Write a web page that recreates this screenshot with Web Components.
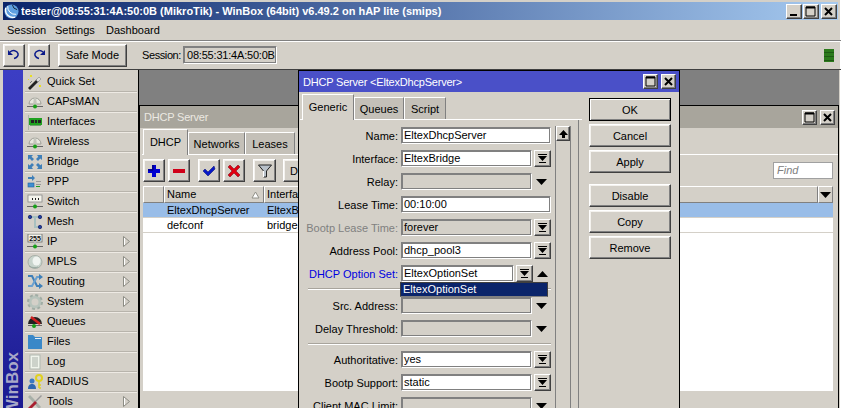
<!DOCTYPE html>
<html>
<head>
<meta charset="utf-8">
<title>WinBox</title>
<style>
  html, body { margin: 0; padding: 0; height: 100%; overflow: hidden; background: #d4d0c8; }
  body { font: 11px "Liberation Sans", Arial, sans-serif; color: #000; }
</style>
</head>
<body>
<wb-app></wb-app>

<script>
// shared 3d edge, pasted into each shadow style
const RAISED = 'background:#d4d0c8;border:1px solid;border-color:#fff #404040 #404040 #fff;box-shadow:inset -1px -1px 0 #808080;box-sizing:border-box;';

const ICONS = {
  quickset: `<path d="M1 14l9-9 2 2-9 9z" fill="#222"/><path d="M9 6l3-3 2 2-3 3z" fill="#ddd" stroke="#777" stroke-width=".5"/><path d="M3 9l2-2" stroke="#777"/><rect x="3" y="1" width="2" height="2" fill="#e8e020"/><rect x="12" y="11" width="2" height="2" fill="#e8e020"/><rect x="1" y="5" width="1" height="1" fill="#e8e020"/>`,
  caps: `<path d="M2 10a6 6 0 0 1 12 0z" fill="#e8e8e0" stroke="#a0a098"/><path d="M7 3h2l1 8H6z" fill="#c4c4bc"/><rect x="0" y="12" width="16" height="1" fill="#666"/><circle cx="8" cy="12.5" r="2" fill="#18a018"/>`,
  iface: `<rect x="1" y="1" width="1" height="15" fill="#a8b8a8"/><rect x="2" y="4" width="13" height="7" fill="#20a020"/><rect x="4" y="6" width="3" height="3" fill="#222"/><rect x="8" y="6" width="2" height="3" fill="#222"/><rect x="11" y="6" width="3" height="3" fill="#222"/><rect x="3" y="11" width="11" height="1" fill="#70a070"/>`,
  bridge: `<g fill="#3f7fb8"><path d="M1 1h5L4.500 2.700 7 5 5 7 2.700 4.500 1 6z"/><path d="M15 1v5l-1.700-1.500L11 7 9 5l2.300-2.300L10 1z"/><path d="M1 15v-5l1.700 1.500L5 9l2 2-2.300 2.300L6 15z"/><path d="M15 15h-5l1.300-1.700L9 11l2-2 2.300 2.300L15 10z"/></g>`,
  ppp: `<path d="M1 3h4V1l3 3-3 3V5H1z" fill="#3f7fb8"/><rect x="1" y="9" width="6" height="4" fill="#3f8fd0" stroke="#2060a0" stroke-width=".6"/><rect x="9" y="7" width="5" height="1" fill="#999"/><rect x="9" y="10" width="5" height="1" fill="#999"/><rect x="9" y="12" width="4" height="1" fill="#20a020"/>`,
  sw: `<rect x="1" y="1" width="14" height="7" fill="#f4f4ec" stroke="#888" stroke-width=".8"/><rect x="5" y="4" width="1" height="2" fill="#222"/><rect x="8" y="4" width="1" height="2" fill="#222"/><rect x="11" y="4" width="1" height="2" fill="#222"/><rect x="7" y="8" width="2" height="4" fill="#bbb"/><rect x="0" y="12" width="16" height="1" fill="#666"/><circle cx="8" cy="12.500" r="2" fill="#18a018"/>`,
  mesh: `<path d="M3 3h10M8 3v10h5" stroke="#a8c0c0" stroke-width="2" fill="none"/><g fill="#2040a0" stroke="#101860" stroke-width=".7"><circle cx="3" cy="3" r="1.700"/><circle cx="13" cy="3" r="1.700"/><circle cx="13" cy="13" r="1.700"/></g>`,
  ip: `<rect x="1" y="0" width="14" height="8" fill="#f4f4ec" stroke="#666" stroke-width=".8"/><text x="8" y="7" font-size="7" font-weight="700" text-anchor="middle" font-family="Liberation Sans" fill="#111">255</text><rect x="7" y="8" width="2" height="4" fill="#bbb"/><rect x="0" y="12" width="16" height="1" fill="#666"/><circle cx="8" cy="12.500" r="2" fill="#18a018"/>`,
  mpls: `<ellipse cx="8" cy="8" rx="7" ry="6.500" fill="#c8d4cc" stroke="#a8b0a8"/><ellipse cx="9.500" cy="7" rx="4" ry="4.500" fill="#f0f4f0"/><path d="M2 12c3 2 7 2 9 1" stroke="#98a8a0" fill="none"/>`,
  routing: `<path d="M1 2h4l5 10h2" stroke="#3f7fb8" stroke-width="2" fill="none"/><path d="M1 12h4l5-9h2" stroke="#6aa0d0" stroke-width="2" fill="none"/><path d="M12 0l4 3-4 3zM12 9l4 3-4 3z" fill="#3f7fb8"/>`,
  system: `<circle cx="8" cy="8" r="5" fill="none" stroke="#b8c4bc" stroke-width="3"/><circle cx="8" cy="8" r="7" fill="none" stroke="#a0aca4" stroke-width="2" stroke-dasharray="3 2.500"/>`,
  queues: `<path d="M1 10a7 7 0 0 1 14 0z" fill="#222"/><path d="M4 3l9 7" stroke="#d02020" stroke-width="2.500"/><rect x="1" y="11" width="14" height="1" fill="#666"/><circle cx="7" cy="12" r="2" fill="#18a018"/>`,
  files: `<path d="M1 1h5l2 2h7v12H1z" fill="#3a88c8"/><rect x="8" y="4" width="6" height="1" fill="#e8f0f8"/>`,
  log: `<rect x="3" y="1" width="10" height="14" fill="#f0f4ec" stroke="#b0b8b0"/><path d="M5 4h6M5 6h6M5 8h6M5 10h6M5 12h6" stroke="#a8b0a8"/>`,
  radius: `<circle cx="5" cy="7" r="2.500" fill="#3a78c0"/><path d="M1 15c0-4 2-5 4-5s4 1 4 5z" fill="#2f68b0"/><circle cx="12" cy="4" r="3" fill="none" stroke="#e0d020" stroke-width="2"/><path d="M12 7v7M12 11h2M12 14h2" stroke="#e0d020" stroke-width="1.600"/>`,
  tools: `<path d="M3 1l3 3 8 9-2 2-8-9-3-3z" fill="#a8b0a8"/><path d="M14 1l1 1-6 6-1-1z" fill="#999"/><path d="M1 14l7-7 2 2-7 7z" fill="#a82030"/>`,
  undo: `<path d="M4 5c3-2.500 7-1.500 8 1.500.6 2-1 4.500-4 5" stroke="#0a1a8a" stroke-width="1.500" fill="none"/><path d="M2 3v5h5z" fill="#0a1a8a"/>`,
  redo: `<path d="M12 5C9 2.500 5 3.500 4 6.500c-.6 2 1 4.500 4 5" stroke="#0a1a8a" stroke-width="1.500" fill="none"/><path d="M14 3v5H9z" fill="#0a1a8a"/>`,
  plus: `<path d="M6 2h4v4h4v4h-4v4H6v-4H2V6h4z" fill="#0000d0"/><path d="M7 2v5H2" stroke="#000060" fill="none"/>`,
  minus: `<rect x="2" y="6" width="12" height="4" fill="#d00018"/>`,
  check: `<path d="M2 8l2-2 3 3 6-6 1 3-7 7z" fill="#0818c8" stroke="#000868" stroke-width=".5"/>`,
  cross: `<path d="M2 4l2-2 4 4 4-4 2 2-4 4 4 4-2 2-4-4-4 4-2-2 4-4z" fill="#e00010" stroke="#700010" stroke-width=".5"/>`,
  filter: `<path d="M1.500 2h13L9.500 8v6h-3V8z" fill="#b8c0c8" stroke="#222"/><path d="M6.500 8v6" stroke="#fff"/>`
};
function icon(name, size) {
  return `<svg xmlns="http://www.w3.org/2000/svg" width="${size}" height="${size}" viewBox="0 0 16 16" style="display:block">${ICONS[name]}</svg>`;
}

class Base extends HTMLElement {
  constructor() {
    super();
    this.attachShadow({ mode: 'open' });
  }
  render(css, html) {
    this.shadowRoot.innerHTML = `<style>${css}</style>${html}`;
  }
  connectedCallback() {
    if (!this.done) { this.done = true; this.draw(); }
  }
}

// little caption glyph button: min, max, close
class WbCap extends Base {
  draw() {
    const big = this.hasAttribute('big');
    const k = this.getAttribute('kind');
    const g = {
      min: '<rect x="3" y="9" width="7" height="2" fill="#000"/>',
      max: '<path d="M2 2h9v9H2z" fill="none" stroke="#000"/><path d="M2 2.500h9" stroke="#000" stroke-width="2"/>',
      close: '<path d="M3 3l7 7M10 3l-7 7" stroke="#000" stroke-width="2"/>'
    }[k];
    this.render(`
      :host { display:block; width:${big ? 16 : 15}px; height:15px; ${RAISED} }
      svg { display:block; margin:0; }
    `, `<svg width="13" height="13" viewBox="0 0 13 13">${g}</svg>`);
  }
}
customElements.define('wb-cap', WbCap);

class WbTitlebar extends Base {
  draw() {
    this.render(`
      :host { display:flex; align-items:center; height:18px; margin:2px 3px 0; padding-left:1px;
        background:linear-gradient(90deg,#0a246a,#a6caf0); color:#fff; font:700 11px "Liberation Sans",sans-serif; }
      .t { flex:1; margin-left:2px; white-space:nowrap; overflow:hidden; }
      .b { display:flex; gap:1px; margin-right:1px; }
      .b wb-cap:last-child { margin-left:1px; }
    `, `
      <svg width="15" height="15" viewBox="0 0 16 16"><circle cx="8" cy="8" r="7.500" fill="#5f9fe0"/><path d="M2 4a8 8 0 0 0 10 10" stroke="#fff" stroke-width="1.500" fill="none"/><path d="M4 2a8 8 0 0 0 9 9" stroke="#fff" fill="none"/><path d="M9 1a6 6 0 0 0 5 5" stroke="#123" fill="none"/></svg>
      <span class="t">tester@08:55:31:4A:50:0B (MikroTik) - WinBox (64bit) v6.49.2 on hAP lite (smips)</span>
      <div class="b"><wb-cap big kind="min"></wb-cap><wb-cap big kind="max"></wb-cap><wb-cap big kind="close"></wb-cap></div>
    `);
  }
}
customElements.define('wb-titlebar', WbTitlebar);

class WbMenubar extends Base {
  draw() {
    this.render(`
      :host { display:grid; grid-template-columns:48px 51px auto; height:20px; align-items:center; padding-left:7px;
        border-bottom:1px solid #808080; box-shadow:0 1px 0 #fff; }
      span { white-space:nowrap; }
      span:first-child { letter-spacing:-.6px; }
    `, `<span>Session</span><span>Settings</span><span>Dashboard</span>`);
  }
}
customElements.define('wb-menubar', WbMenubar);

class WbBtn extends Base {
  draw() {
    const w = this.getAttribute('w');
    const h = this.getAttribute('h') || 23;
    const def = this.hasAttribute('default');
    this.render(`
      :host { display:flex; align-items:center; justify-content:center; flex:none; white-space:nowrap;
        ${w ? `width:${w}px;` : ''} height:${h}px; ${RAISED}
        ${def ? 'border-color:#000;box-shadow:inset 1px 1px 0 #fff,inset -1px -1px 0 #808080;' : 'box-shadow:inset -1px -1px 0 #808080,inset 1px 1px 0 #f4f2ee;'} }
    `, `<slot></slot>`);
  }
}
customElements.define('wb-btn', WbBtn);

class WbIconBtn extends Base {
  draw() {
    this.render(`
      :host { display:flex; align-items:center; justify-content:center; flex:none;
        width:${this.getAttribute('w') || 22}px; height:23px; margin-right:${this.getAttribute('mr') || 0}px; ${RAISED}
        box-shadow:inset -1px -1px 0 #808080,inset 1px 1px 0 #f4f2ee; }
    `, icon(this.getAttribute('icon'), 16));
  }
}
customElements.define('wb-iconbtn', WbIconBtn);

class WbToolbar extends Base {
  draw() {
    this.render(`
      :host { display:flex; align-items:center; height:28px; padding:0 7px 0 3px; border-bottom:1px solid #404040; }
      .sess { margin-left:15px; width:41px; flex:none; letter-spacing:-.4px; }
      .field { width:94px; height:18px; line-height:16px; padding-left:3px; box-sizing:border-box;
        border:1px solid; border-color:#808080 #fff #fff #808080; box-shadow:inset 1px 1px 0 #808080, inset -1px -1px 0 #808080; white-space:nowrap; letter-spacing:-.2px; }
      .led { margin-left:auto; width:10px; height:13px; background:repeating-linear-gradient(180deg,#2c7a1c 0 3px,#1e5a14 3px 4px); }
    `, `
      <wb-iconbtn icon="undo" mr="3"></wb-iconbtn><wb-iconbtn icon="redo" mr="8"></wb-iconbtn>
      <wb-btn w="69">Safe Mode</wb-btn>
      <span class="sess">Session:</span><div class="field">08:55:31:4A:50:0B</div>
      <div class="led"></div>
    `);
  }
}
customElements.define('wb-toolbar', WbToolbar);

class WbSideItem extends Base {
  draw() {
    const sub = this.hasAttribute('sub');
    this.render(`
      :host { display:flex; align-items:center; height:20px; box-sizing:border-box;
        border-bottom:1px solid #b8b4ac; box-shadow:0 1px 0 #eeeae4; }
      .i { width:16px; height:16px; margin:0 4px 0 2px; flex:none; }
      .a { margin-left:auto; margin-right:7px; }
      span { white-space:nowrap; padding-bottom:2px; }
    `, `<div class="i">${icon(this.getAttribute('icon'), 16)}</div><span><slot></slot></span>
      ${sub ? `<svg class="a" width="7" height="11" viewBox="0 0 7 11"><path d="M.5.500l6 5-6 5z" fill="#d4d0c8" stroke="#8c8c84"/><path d="M1.500 2v7" stroke="#fff"/></svg>` : ''}`);
  }
}
customElements.define('wb-sideitem', WbSideItem);

class WbSidebar extends Base {
  draw() {
    const items = [
      ['quickset', 'Quick Set'], ['caps', 'CAPsMAN'], ['iface', 'Interfaces'], ['caps', 'Wireless'],
      ['bridge', 'Bridge'], ['ppp', 'PPP'], ['sw', 'Switch'], ['mesh', 'Mesh'], ['ip', 'IP', 1],
      ['mpls', 'MPLS', 1], ['routing', 'Routing', 1], ['system', 'System', 1], ['queues', 'Queues'],
      ['files', 'Files'], ['log', 'Log'], ['radius', 'RADIUS'], ['tools', 'Tools', 1]
    ];
    this.render(`
      :host { display:flex; flex:none; width:135px; margin-left:3px; overflow:hidden; border-right:1px solid #000; }
      .strip { width:20px; flex:none; position:relative; overflow:hidden;
        background:linear-gradient(180deg,#3c3ec4,#3434b4 45%,#1a1a90); }
      .word { position:absolute; left:0; top:282px; writing-mode:vertical-rl; transform:rotate(180deg);
        font:700 17px "Liberation Sans",sans-serif; color:#a8a8c8; white-space:nowrap; line-height:20px; }
      .list { flex:1; padding:2px 1px 0 2px; min-width:0; }
    `, `
      <div class="strip"><div class="word">WinBox</div></div>
      <div class="list">${items.map(i => `<wb-sideitem icon="${i[0]}" ${i[2] ? 'sub' : ''}>${i[1]}</wb-sideitem>`).join('')}</div>
    `);
  }
}
customElements.define('wb-sidebar', WbSidebar);

class WbWindow extends Base {
  draw() {
    const active = this.hasAttribute('active');
    this.render(`
      :host { position:absolute; display:flex; flex-direction:column; box-sizing:border-box;
        border:1px solid #000; border-bottom:0; background:#d4d0c8; }
      .bar { display:flex; align-items:center; height:${active ? 21 : 22}px; flex:none; padding:0 3px 0 4px;
        background:${active ? '#4a50c8' : '#a8a59c'}; color:${active ? '#fff' : '#ece9e2'}; }
      .t { flex:1; white-space:nowrap; letter-spacing:-.2px; }
      .c { display:flex; gap:3px; }
      .body { flex:1; min-height:0; }
    `, `
      <div class="bar"><span class="t">${this.getAttribute('caption').replace(/</g, '&lt;')}</span>
        <div class="c"><wb-cap kind="max"></wb-cap><wb-cap kind="close"></wb-cap></div></div>
      <div class="body"><slot></slot></div>
    `);
  }
}
customElements.define('wb-window', WbWindow);

class WbTabs extends Base {
  draw() {
    const tabs = this.getAttribute('tabs').split(',');
    const ws = this.getAttribute('widths').split(',');
    const ml = this.getAttribute('ml') || 0;
    const h = this.getAttribute('h') || 25;
    this.render(`
      :host { display:flex; align-items:flex-end; height:${h}px; padding-left:${ml}px; box-sizing:border-box;
        border-bottom:1px solid #fff; }
      div { box-sizing:border-box; height:22px; text-align:center; line-height:23px; background:#c4c0b8;
        border:1px solid; border-color:#fff #808080 transparent #fff; border-bottom:0; white-space:nowrap; }
      div.on { height:26px; background:#d4d0c8; line-height:24px; margin-bottom:-1px; position:relative; }
    `, tabs.map((t, i) => `<div class="${i ? '' : 'on'}" style="width:${ws[i]}px">${t}</div>`).join(''));
  }
}
customElements.define('wb-tabs', WbTabs);

class WbDhcpPanel extends Base {
  draw() {
    this.render(`
      :host { display:block; padding:2px 5px 0 3px; height:300px; box-sizing:border-box; }
      .tabs { margin:0 -5px 0 -1px; }
      .tools { display:flex; align-items:center; height:31px; position:relative; }
      .find { position:absolute; right:0; top:7px; width:60px; height:17px; box-sizing:border-box; background:#fff;
        border:1px solid #a0a0a0; padding-left:3px; line-height:15px; font-style:italic; color:#808080; }
      .cfg { margin-left:7px; }
      .table { background:#fff; height:205px; }
      .head { display:grid; grid-template-columns:21px 100px 1fr 15px; height:17px; background:#d4d0c8; }
      .head div { box-sizing:border-box; border:1px solid; border-color:#fff #808080 #808080 #fff; padding-left:2px; line-height:15px; white-space:nowrap; overflow:hidden; position:relative; }
      .head svg { position:absolute; right:3px; top:4px; }
      .row { display:grid; grid-template-columns:21px 100px 1fr; height:15px; line-height:14px; box-sizing:border-box; border-bottom:1px solid #d4d0c8; white-space:nowrap; }
      .row.sel { background:#99bde8; }
      .row span { padding-left:3px; overflow:hidden; }
    `, `
      <wb-tabs class="tabs" ml="1" tabs="DHCP,Networks,Leases" widths="45,57,50"></wb-tabs>
      <div class="tools">
        <wb-iconbtn icon="plus" mr="3"></wb-iconbtn><wb-iconbtn icon="minus" mr="8"></wb-iconbtn>
        <wb-iconbtn icon="check" mr="3"></wb-iconbtn><wb-iconbtn icon="cross" mr="8"></wb-iconbtn>
        <wb-iconbtn icon="filter" w="23"></wb-iconbtn>
        <wb-btn class="cfg" w="80">DHCP Config</wb-btn>
        <div class="find">Find</div>
      </div>
      <div class="table">
        <div class="head"><div></div><div>Name<svg width="9" height="8" viewBox="0 0 9 8"><path d="M4.500 1L8 7H1z" fill="#fff" stroke="#909088"/></svg></div><div>Interface</div>
          <div style="padding:0"><svg style="right:1px;top:5px" width="11" height="6" viewBox="0 0 11 6"><path d="M0 0h11L5.500 6z"/></svg></div></div>
        <div class="row sel"><span></span><span>EltexDhcpServer</span><span>EltexBridge</span></div>
        <div class="row"><span></span><span>defconf</span><span>bridge</span></div>
      </div>
    `);
  }
}
customElements.define('wb-dhcp-panel', WbDhcpPanel);

// one form row of the dialog
class WbRow extends Base {
  draw() {
    const a = n => this.getAttribute(n);
    const kind = a('kind') || 'text';
    const off = kind.includes('off');
    const combo = kind.includes('combo');
    const drop = kind.includes('drop');
    const short = this.hasAttribute('short');
    const fw = short ? 113 : ((combo || drop) ? 131 : 150);
    const arrow = `<svg width="11" height="6" viewBox="0 0 11 6"><path d="M0 0h11L5.500 6z"/></svg>`;
    const up = `<svg width="11" height="6" viewBox="0 0 11 6"><path d="M0 6h11L5.500 0z"/></svg>`;
    const cb = `<svg width="9" height="9" viewBox="0 0 9 9"><rect x="0" y="0" width="9" height="1"/><path d="M0 2h9L4.500 7zM1 8h7v1H1z"/></svg>`;
    this.render(`
      :host { display:flex; align-items:center; height:17px; margin-bottom:6px; color:${a('color') || '#000'}; }
      label { width:98px; margin-right:3px; text-align:right; white-space:nowrap; flex:none; }
      .f { width:${fw}px; height:17px; line-height:15px; padding-left:2px; background:${off ? '#d4d0c8' : '#fff'}; color:#000; flex:none;
        border:1px solid; border-color:#808080 #fff #fff #808080; box-sizing:border-box; box-shadow:inset 1px 1px 0 #808080,inset -1px -1px 0 #808080; white-space:nowrap; }
      .b { width:17px; height:17px; margin-left:2px; display:flex; align-items:center; justify-content:center; flex:none; ${RAISED} }
      .d { width:19px; display:flex; justify-content:center; flex:none; }
    `, `
      <label>${a('label') || ''}</label>
      <div class="f">${a('value') || ''}</div>
      ${combo ? `<div class="b">${cb}</div>` : ''}
      ${drop ? `<div class="d">${this.hasAttribute('open') ? up : arrow}</div>` : ''}
    `);
  }
}
customElements.define('wb-row', WbRow);

class WbSep extends Base {
  draw() {
    this.render(`
      :host { display:block; height:2px; width:243px; margin:0 0 ${this.getAttribute('mb')}px 8px;
        border-top:1px solid #a8a49c; border-bottom:1px solid #fff; box-sizing:border-box; }
    `, '');
  }
}
customElements.define('wb-sep', WbSep);

class WbDhcpDialog extends Base {
  draw() {
    this.render(`
      :host { display:grid; grid-template-columns:1fr 82px; column-gap:7px; padding:0 8px 0 1px; height:316px; }
      .left { min-width:0; }
      .panel { display:grid; grid-template-columns:1fr 16px; column-gap:4px; padding:7px 7px 0 0; margin-right:3px;
        border-right:1px solid #808080; height:290px; box-sizing:border-box; }
      .scroll { display:flex; flex-direction:column; margin-top:-1px; width:16px; height:290px; box-sizing:border-box;
        border-left:1px solid #808080; border-right:1px solid #808080; }
      .up { height:15px; ${RAISED} display:flex; align-items:center; justify-content:center; }
      .rows { position:relative; min-width:0; }
      .right { padding-top:6px; display:flex; flex-direction:column; gap:3px; }
      .gap { height:5px; }
      .popup { position:absolute; left:100px; top:155px; width:148px; height:15px; box-sizing:border-box; background:#0a246a; color:#fff;
        border:1px solid #404040; border-bottom-color:#808080; padding-left:2px; line-height:13px; z-index:2; white-space:nowrap; }
    `, `
      <div class="left">
        <wb-tabs h="28" ml="2" tabs="Generic,Queues,Script" widths="52,50,42"></wb-tabs>
        <div class="panel">
          <div class="rows">
            <wb-row label="Name:" value="EltexDhcpServer"></wb-row>
            <wb-row label="Interface:" value="EltexBridge" kind="combo"></wb-row>
            <wb-row label="Relay:" kind="off drop"></wb-row>
            <wb-row label="Lease Time:" value="00:10:00"></wb-row>
            <wb-row label="Bootp Lease Time:" value="forever" kind="off combo" color="#808080"></wb-row>
            <wb-row label="Address Pool:" value="dhcp_pool3" kind="combo"></wb-row>
            <wb-row label="DHCP Option Set:" value="EltexOptionSet" kind="combo drop" short open color="#0000e0"></wb-row>
            <wb-sep mb="7"></wb-sep>
            <wb-row label="Src. Address:" kind="off drop"></wb-row>
            <wb-row label="Delay Threshold:" kind="off drop"></wb-row>
            <wb-sep mb="6"></wb-sep>
            <wb-row label="Authoritative:" value="yes" kind="combo"></wb-row>
            <wb-row label="Bootp Support:" value="static" kind="combo"></wb-row>
            <wb-row label="Client MAC Limit:" kind="off drop"></wb-row>
            <div class="popup">EltexOptionSet</div>
          </div>
          <div class="scroll"><div class="up"><svg width="9" height="8" viewBox="0 0 9 8"><path d="M4.500 0L9 5H6v3H3V5H0z"/></svg></div></div>
        </div>
      </div>
      <div class="right">
        <wb-btn default>OK</wb-btn><wb-btn>Cancel</wb-btn><wb-btn>Apply</wb-btn>
        <div class="gap"></div>
        <wb-btn>Disable</wb-btn><wb-btn>Copy</wb-btn><wb-btn>Remove</wb-btn>
      </div>
    `);
  }
}
customElements.define('wb-dhcp-dialog', WbDhcpDialog);

class WbApp extends Base {
  draw() {
    this.render(`
      :host { display:flex; flex-direction:column; width:841px; height:408px; overflow:hidden; background:#d4d0c8; box-shadow:inset -1px 0 0 #fff; }
      .main { flex:1; display:flex; min-height:0; }
      .desk { position:relative; flex:1; min-width:0; background:#808080; margin-right:2px; overflow:hidden; }
      .dhcp { left:0; top:35px; width:700px; height:310px; }
      .dlg { left:159px; top:0; width:382px; height:340px; }
    `, `
      <wb-titlebar></wb-titlebar>
      <wb-menubar></wb-menubar>
      <wb-toolbar></wb-toolbar>
      <div class="main">
        <wb-sidebar></wb-sidebar>
        <div class="desk">
          <wb-window class="dhcp" caption="DHCP Server"><wb-dhcp-panel></wb-dhcp-panel></wb-window>
          <wb-window class="dlg" active caption="DHCP Server <EltexDhcpServer>"><wb-dhcp-dialog></wb-dhcp-dialog></wb-window>
        </div>
      </div>
    `);
  }
}
customElements.define('wb-app', WbApp);
</script>
</body>
</html>
